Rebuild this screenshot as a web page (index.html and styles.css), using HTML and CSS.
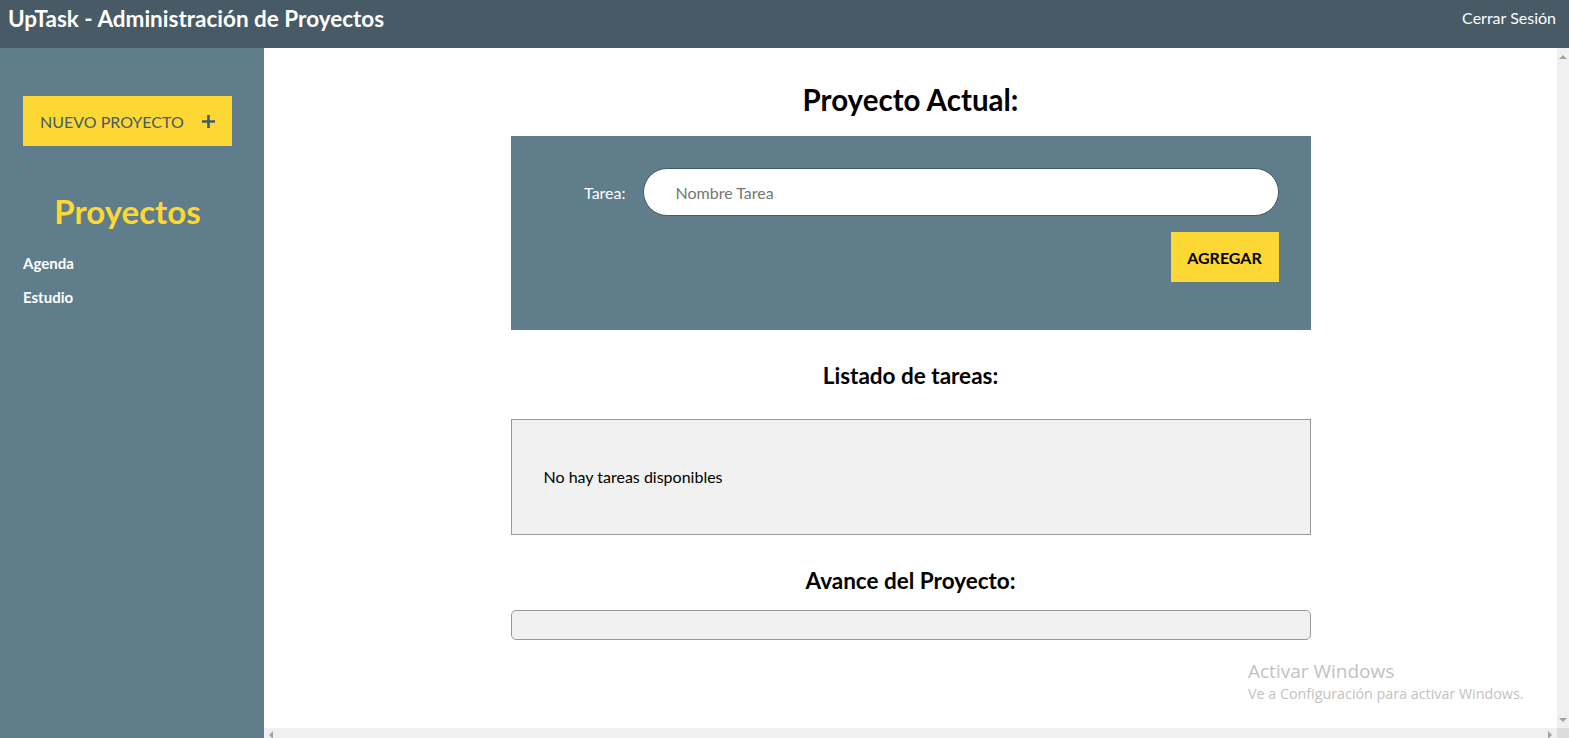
FILE: index.html
```html
<!DOCTYPE html>
<html lang="es">
<head>
<meta charset="utf-8">
<title>UpTask</title>
<link rel="stylesheet" href="styles.css">
</head>
<body>
<header class="topbar">
  <h1 class="app-title">UpTask - Administración de Proyectos</h1>
  <a class="logout" href="#">Cerrar Sesión</a>
</header>
<div class="layout">
  <aside class="sidebar">
    <a class="new-project" href="#">
      <span>NUEVO PROYECTO</span>
      <svg class="plus" width="13" height="13" viewBox="0 0 13 13" aria-hidden="true"><path d="M6.5 0v13M0 6.5h13" stroke="#455a64" stroke-width="2.6"/></svg>
    </a>
    <h2 class="side-title">Proyectos</h2>
    <ul class="project-list">
      <li><a href="#">Agenda</a></li>
      <li><a href="#">Estudio</a></li>
    </ul>
  </aside>
  <main class="viewport">
    <div class="viewport-row">
      <div class="content">
        <h2 class="page-title">Proyecto Actual:</h2>
        <form class="task-card">
          <div class="field">
            <label class="field-label" for="tarea">Tarea:</label>
            <input class="field-input" id="tarea" type="text" placeholder="Nombre Tarea">
          </div>
          <div class="actions">
            <button class="btn-add" type="button">AGREGAR</button>
          </div>
        </form>
        <h3 class="section-title">Listado de tareas:</h3>
        <div class="task-list">No hay tareas disponibles</div>
        <h3 class="section-title progress-title">Avance del Proyecto:</h3>
        <div class="progress"></div>
      </div>
      <div class="vscroll">
        <span class="arrow arrow-up"></span>
        <span class="arrow arrow-down"></span>
      </div>
    </div>
    <div class="hscroll">
      <div class="hbar">
        <span class="arrow arrow-left"></span>
        <span class="arrow arrow-right"></span>
      </div>
      <div class="corner"></div>
    </div>
  </main>
</div>
<div class="watermark">
  <div class="wm-title">Activar Windows</div>
  <div class="wm-sub">Ve a Configuración para activar Windows.</div>
</div>
</body>
</html>
```
FILE: styles.css
```css
* { box-sizing: border-box; }
html, body { margin: 0; padding: 0; }
body {
  font-family: Lato, "Open Sans", Arial, sans-serif;
  width: 1569px;
  height: 738px;
  overflow: hidden;
  display: flex;
  flex-direction: column;
  background: #fff;
}
a { text-decoration: none; }

.topbar {
  height: 48px;
  flex: 0 0 48px;
  background: #475a65;
  display: flex;
  align-items: center;
  justify-content: space-between;
  padding: 0 13px 11px 8px;
}
.app-title {
  margin: 0;
  color: #fff;
  font-size: 22.5px;
  font-weight: 700;
  line-height: 26px;
}
.logout {
  color: #fff;
  font-size: 16px;
  margin-bottom: 2px;
}

.layout {
  flex: 1;
  display: flex;
  min-height: 0;
}
.sidebar {
  width: 264px;
  flex: 0 0 264px;
  background: #607d8b;
  padding: 48px 0 0 23px;
}
.new-project {
  width: 209px;
  height: 50px;
  background: #fdd835;
  color: #455a64;
  font-size: 16px;
  display: flex;
  align-items: center;
  justify-content: space-between;
  padding: 0 17px 0 17px;
}
.side-title {
  width: 209px;
  margin: 45px 0 0;
  text-align: center;
  color: #fdd835;
  font-size: 33px;
  font-weight: 700;
  line-height: 40px;
}
.project-list {
  list-style: none;
  margin: 15px 0 0;
  padding: 0;
}
.project-list li {
  line-height: 33px;
}
.project-list a {
  color: #fff;
  font-weight: 700;
  font-size: 15px;
}

.viewport {
  flex: 1;
  display: flex;
  flex-direction: column;
  min-width: 0;
}
.viewport-row {
  flex: 1;
  display: flex;
  min-height: 0;
}
.content {
  flex: 1;
}
.page-title {
  margin: 34px 0 19px;
  text-align: center;
  font-size: 29.5px;
  font-weight: 700;
  line-height: 35px;
  color: #000;
}
.task-card {
  width: 800px;
  margin: 0 auto;
  background: #607d8b;
  padding: 32px 32px 48px;
}
.field {
  display: flex;
  align-items: center;
}
.field-label {
  width: 100px;
  padding-right: 17px;
  text-align: right;
  color: #fff;
  font-size: 16px;
}
.field-input {
  flex: 1;
  height: 48px;
  border: 1px solid #455a64;
  border-radius: 24px;
  background: #fff;
  padding: 0 32px;
  font-family: Lato, Arial, sans-serif;
  font-size: 16px;
  outline: none;
}
.field-input::placeholder { color: #757575; }
.actions {
  display: flex;
  justify-content: flex-end;
  margin-top: 16px;
}
.btn-add {
  width: 108px;
  height: 50px;
  border: 0;
  background: #fdd835;
  color: #000;
  font-family: Lato, Arial, sans-serif;
  font-weight: 700;
  font-size: 16px;
  padding: 0;
}
.section-title {
  margin: 33px 0 30px;
  text-align: center;
  font-size: 22.5px;
  font-weight: 700;
  line-height: 26px;
  color: #000;
}
.progress-title { margin-bottom: 16px; }
.task-list {
  width: 800px;
  margin: 0 auto;
  background: #f1f1f1;
  border: 1px solid #999;
  padding: 47px 32px;
  line-height: 20px;
  font-size: 16px;
  color: #000;
}
.progress {
  width: 800px;
  height: 30px;
  margin: 0 auto;
  background: #f1f1f1;
  border: 1px solid #999;
  border-radius: 5px;
}

.vscroll {
  width: 12px;
  flex: 0 0 12px;
  background: #f0f0f0;
  display: flex;
  flex-direction: column;
  justify-content: space-between;
  align-items: center;
  padding: 7px 0 6px;
}
.hscroll {
  height: 10px;
  flex: 0 0 10px;
  display: flex;
}
.hbar {
  flex: 1;
  background: #f0f0f0;
  display: flex;
  justify-content: space-between;
  align-items: center;
  padding: 0 5px;
}
.corner {
  width: 12px;
  background: #dcdcdc;
}
.arrow { display: block; width: 0; height: 0; }
.arrow-up {
  border-left: 4px solid transparent;
  border-right: 4px solid transparent;
  border-bottom: 4px solid #a3a3a3;
}
.arrow-down {
  border-left: 4px solid transparent;
  border-right: 4px solid transparent;
  border-top: 4px solid #a3a3a3;
}
.arrow-left {
  border-top: 4px solid transparent;
  border-bottom: 4px solid transparent;
  border-right: 4px solid #a3a3a3;
  margin-top: 4px;
}
.arrow-right {
  border-top: 4px solid transparent;
  border-bottom: 4px solid transparent;
  border-left: 4px solid #a3a3a3;
  margin-top: 4px;
}

.watermark {
  position: absolute;
  left: 1248px;
  top: 658px;
  color: #c2c2c2;
  font-family: "Open Sans", "DejaVu Sans", sans-serif;
  pointer-events: none;
}
.wm-title { font-size: 19px; line-height: 26px; }
.wm-sub { font-size: 14.3px; line-height: 20px; }
```
